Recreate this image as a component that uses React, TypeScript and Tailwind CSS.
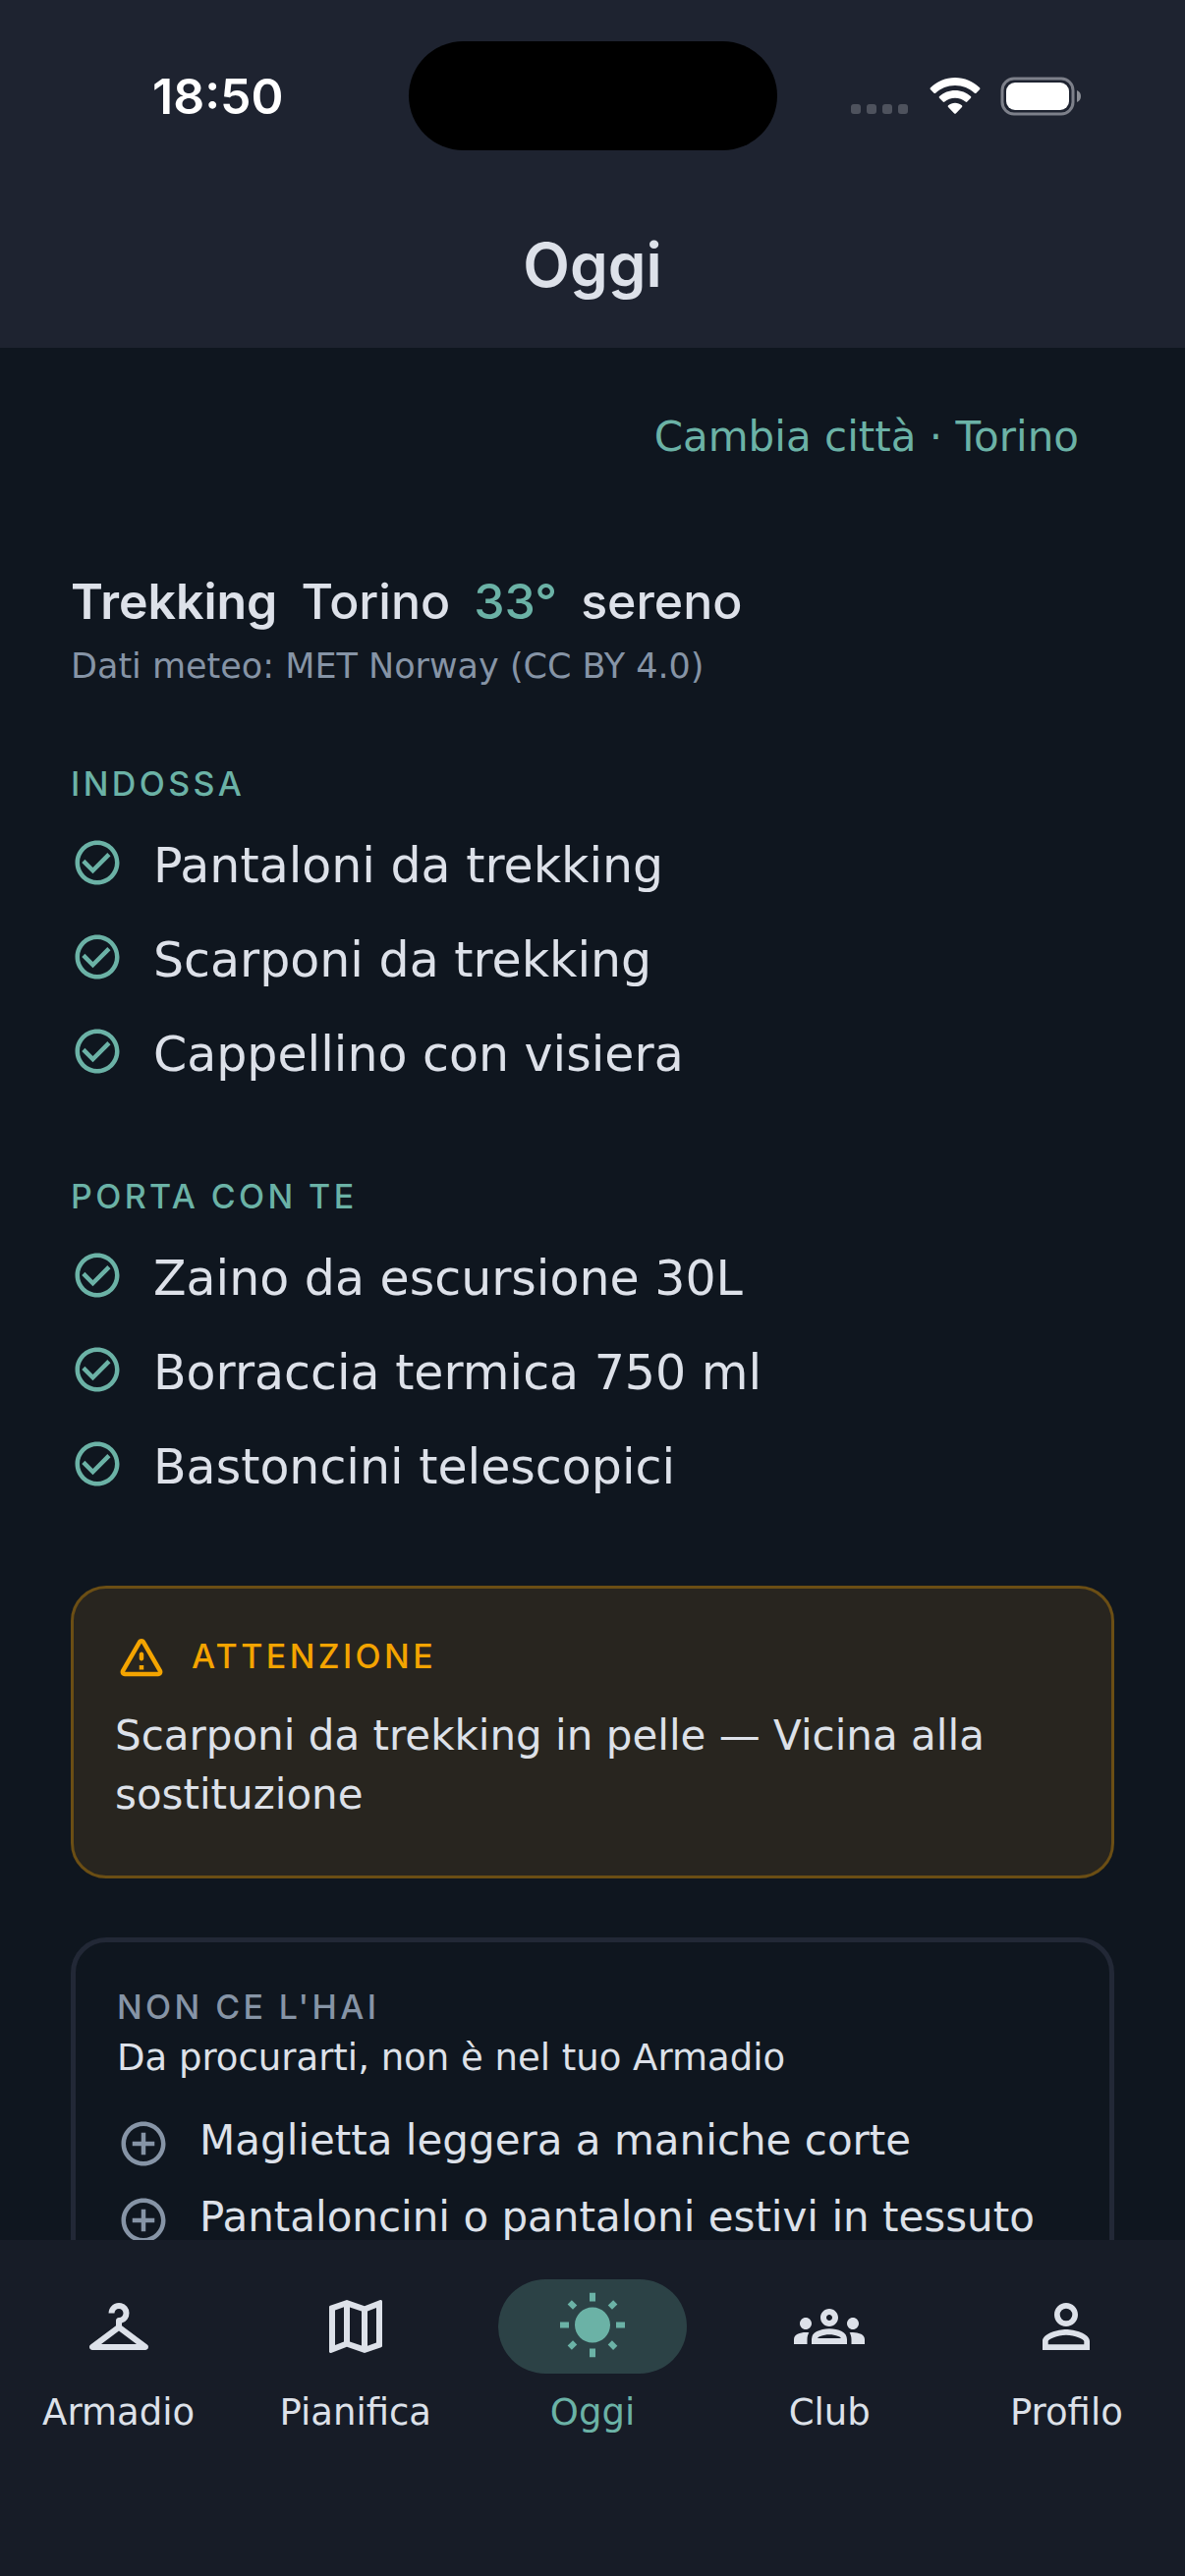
import React, { useState } from 'react';
import type { ReactNode } from 'react';
import type { IconType } from 'react-icons';
import {
  MdAddCircleOutline,
  MdCheckCircleOutline,
  MdCheckroom,
  MdOutlineGroups,
  MdOutlineMap,
  MdPersonOutline,
  MdWbSunny,
} from 'react-icons/md';

const wear = ['Pantaloni da trekking', 'Scarponi da trekking', 'Cappellino con visiera'];
const carry = ['Zaino da escursione 30L', 'Borraccia termica 750 ml', 'Bastoncini telescopici'];
const missing = ['Maglietta leggera a maniche corte', 'Pantaloncini o pantaloni estivi in tessuto'];

const tabs: { id: string; label: string; Icon: IconType }[] = [
  { id: 'armadio', label: 'Armadio', Icon: MdCheckroom },
  { id: 'pianifica', label: 'Pianifica', Icon: MdOutlineMap },
  { id: 'oggi', label: 'Oggi', Icon: MdWbSunny },
  { id: 'club', label: 'Club', Icon: MdOutlineGroups },
  { id: 'profilo', label: 'Profilo', Icon: MdPersonOutline },
];

const StatusBar = () => (
  <div className="grid h-[186px] grid-cols-[1fr_375px_1fr] items-start pt-[42px] text-white">
    <div className="flex h-[111px] items-center justify-center pl-7 font-[Inter,sans-serif] text-[50px] leading-none font-semibold">
      18:50
    </div>
    <div className="h-[111px] rounded-full bg-black" />
    <div className="flex h-[111px] items-center gap-5 pl-[75px]">
      <svg width="60" height="40" viewBox="0 0 60 40" fill="#4e525d">
        <rect x="0" y="28" width="10" height="10" rx="3" />
        <rect x="16" y="28" width="10" height="10" rx="3" />
        <rect x="32" y="28" width="10" height="10" rx="3" />
        <rect x="48" y="28" width="10" height="10" rx="3" />
      </svg>
      <svg width="52" height="40" viewBox="0 0 52 40" fill="currentColor">
        <path d="M26 1C16.400 1 7.500 4.800 1 11.200c-.6.6-.6 1.200-.1 1.800l3.600 3.700c.5.5 1.200.5 1.700 0C11.300 11.800 18.300 8.900 26 8.900s14.700 2.900 19.800 7.800c.5.5 1.200.5 1.700 0l3.600-3.700c.5-.6.5-1.200-.1-1.800C44.500 4.800 35.600 1 26 1z" />
        <path d="M26 14c-6.100 0-11.700 2.300-15.900 6.100-.6.500-.6 1.200-.1 1.700l3.700 3.700c.5.500 1.100.500 1.700.1C18.200 23.200 21.900 21.700 26 21.700s7.800 1.500 10.600 3.900c.6.400 1.200.4 1.700-.1l3.700-3.700c.5-.5.5-1.200-.1-1.700C37.700 16.300 32.100 14 26 14z" />
        <path d="M26 26.800c-2.600 0-5 .9-6.900 2.400-.6.500-.6 1.200-.1 1.700l6.200 6.500c.5.500 1.100.5 1.600 0l6.200-6.500c.5-.5.5-1.200-.1-1.700-1.900-1.500-4.300-2.400-6.900-2.400z" />
      </svg>
      <svg width="84" height="40" viewBox="0 0 84 40">
        <rect x="2" y="2" width="72" height="36" rx="12" fill="none" stroke="#7d808a" strokeWidth="3" />
        <rect x="6" y="6" width="64" height="28" rx="9" fill="currentColor" />
        <path d="M78 14c2.600 1 4 3.300 4 6s-1.400 5-4 6z" fill="#8a8d95" />
      </svg>
    </div>
  </div>
);

const WarningIcon = () => (
  <svg className="size-[54px]" viewBox="0 0 24 24" fill="currentColor">
    <path d="M12 5.990L19.530 19H4.470L12 5.990M2.740 18c-.77 1.330.19 3 1.730 3h15.060c1.540 0 2.500-1.670 1.730-3L13.730 4.990c-.77-1.330-2.690-1.330-3.460 0L2.740 18zM11 11v2c0 .55.45 1 1 1s1-.45 1-1v-2c0-.55-.45-1-1-1s-1 .45-1 1zm0 5h2v2h-2z" />
  </svg>
);

const Overline = ({ className, children }: { className?: string; children: ReactNode }) => (
  <h2 className={`font-[Inter,sans-serif] text-[34px] leading-[48px] font-medium tracking-widest uppercase ${className ?? ''}`}>
    {children}
  </h2>
);

const CheckSection = ({ title, items }: { title: string; items: string[] }) => (
  <section>
    <Overline className="text-[#6bb2a6]">{title}</Overline>
    <ul className="mt-6 flex flex-col gap-6">
      {items.map((item) => (
        <li key={item} className="flex items-start gap-[30px]">
          <span className="flex h-16 shrink-0 items-center text-[#6bb2a6]">
            <MdCheckCircleOutline size={54} />
          </span>
          <span className="text-[49px] leading-[72px]">{item}</span>
        </li>
      ))}
    </ul>
  </section>
);

const App = () => {
  const [activeTab, setActiveTab] = useState('oggi');

  return (
    <div className="flex h-screen flex-col bg-[#0f161f] font-['DejaVu_Sans',sans-serif] text-[#dde1e9]">
      <header className="shrink-0 bg-[#1e2330]">
        <StatusBar />
        <div className="flex h-[168px] items-center justify-center">
          <h1 className="font-[Inter,sans-serif] text-[62px] leading-none font-semibold">Oggi</h1>
        </div>
      </header>

      <main className="min-h-0 flex-1 overflow-hidden px-[72px] pt-[30px]">
        <div className="flex justify-end">
          <button className="h-[120px] px-9 text-[42px] text-[#6bb2a6]">Cambia città · Torino</button>
        </div>

        <div className="mt-[78px] flex gap-6 font-[Inter,sans-serif] text-[50px] leading-[60px] font-medium">
          <span className="font-semibold">Trekking</span>
          <span>Torino</span>
          <span className="text-[#6bb2a6]">33°</span>
          <span>sereno</span>
        </div>
        <p className="mt-3 text-[35px] leading-[48px] text-[#8694a6]">Dati meteo: MET Norway (CC BY 4.0)</p>

        <div className="mt-[72px] flex flex-col gap-[84px]">
          <CheckSection title="Indossa" items={wear} />
          <CheckSection title="Porta con te" items={carry} />

          <section className="rounded-[36px] border-3 border-[#6b4e14] bg-[#28251f] px-[42px] pt-[42px] pb-[52px]">
            <div className="flex items-center gap-6 text-[#f4a400]">
              <WarningIcon />
              <Overline>Attenzione</Overline>
            </div>
            <p className="mt-6 text-[42px] leading-[60px]">Scarponi da trekking in pelle — Vicina alla sostituzione</p>
          </section>
        </div>

        <section className="mt-[60px] rounded-[36px] border-5 border-[#222836] p-[42px]">
          <Overline className="text-[#8694a6]">Non ce l'hai</Overline>
          <p className="mt-1 text-[37px] leading-[48px]">Da procurarti, non è nel tuo Armadio</p>
          <ul className="mt-9 flex flex-col gap-6">
            {missing.map((item) => (
              <li key={item} className="flex items-start gap-[30px]">
                <MdAddCircleOutline size={54} className="shrink-0 text-[#8694a6]" />
                <span className="text-[42px] leading-[48px]">{item}</span>
              </li>
            ))}
          </ul>
        </section>
      </main>

      <nav className="grid h-[342px] shrink-0 grid-cols-5 items-start bg-[#171c27] pt-10">
        {tabs.map(({ id, label, Icon }) => (
          <button
            key={id}
            onClick={() => setActiveTab(id)}
            className={`flex flex-col items-center gap-4 ${activeTab === id ? 'text-[#6bb2a6]' : ''}`}
          >
            <span
              className={`flex h-24 w-[192px] items-center justify-center rounded-full ${
                activeTab === id ? 'bg-[#2c4246]' : ''
              }`}
            >
              <Icon size={72} />
            </span>
            <span className="text-[37px] leading-[48px]">{label}</span>
          </button>
        ))}
      </nav>
    </div>
  );
};

export default App;
